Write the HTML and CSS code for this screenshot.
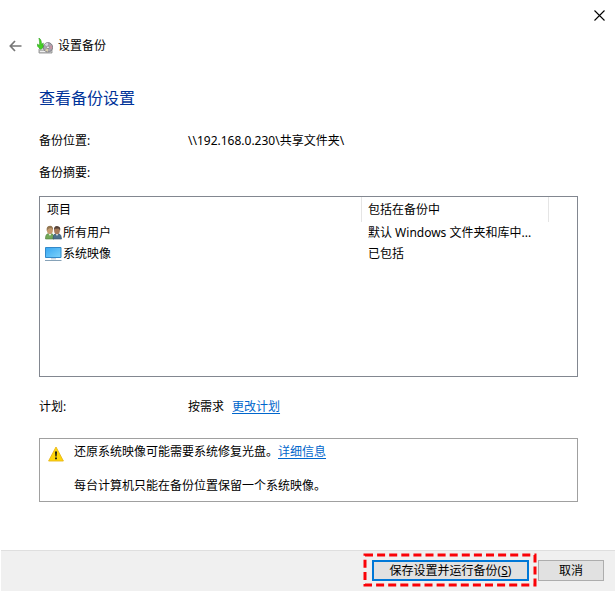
FILE: index.html
```html
<!DOCTYPE html>
<html lang="zh-CN">
<head>
<meta charset="utf-8">
<title>设置备份</title>
<link rel="stylesheet" href="styles.css">
</head>
<body>
<div class="window">
  <div class="titlebar">
    <svg class="close" width="11" height="11" viewBox="0 0 11 11"><path d="M.5.5l10 10M10.500.5l-10 10" stroke="#000" stroke-width="1.1"/></svg>
  </div>
  <header class="header">
    <svg class="back" width="13" height="12" viewBox="0 0 13 12"><path d="M6 1L1.300 6 6 11M1.500 6H12.500" fill="none" stroke="#777" stroke-width="1.7"/></svg>
    <svg class="app-icon" width="16" height="16" viewBox="0 0 16 16">
      <path d="M2 11l3-3h8l2 4v3H2z" fill="#d5d7d6" stroke="#777" stroke-width=".7"/>
      <path d="M2.500 12.500h7v2h-7z" fill="#eee" stroke="#888" stroke-width=".5"/>
      <circle cx="11" cy="9.300" r="4.700" fill="#a7a5ae" stroke="#74727a" stroke-width=".8"/>
      <path d="M11 9.300L7.500 6.500A4.500 4.500 0 0 1 11 4.800z" fill="#d6d5e1"/>
      <path d="M11 9.300l4-2v4z" fill="#c795a2"/>
      <path d="M11 9.300l-3 3.200 3 1.200z" fill="#d8cfaa"/>
      <circle cx="11" cy="9.300" r="1.300" fill="#fff" stroke="#666" stroke-width=".6"/>
      <path d="M1.800 0C4 1 4.600 3.500 4.500 6.500L6.300 5 6 9.500 3.700 11.500.3 8 .5 6l2 1.500C2.700 4 2.400 2 1.800 0z" fill="#43d322" stroke="#249516" stroke-width=".5"/>
    </svg>
    <span>设置备份</span>
  </header>
  <main class="content">
    <h1>查看备份设置</h1>
    <div class="field location"><span class="label">备份位置:</span><span>\\192.168.0.230\共享文件夹\</span></div>
    <div class="field summary"><span class="label">备份摘要:</span></div>
    <div class="list">
      <div class="row list-head"><span class="name">项目</span><span class="included">包括在备份中</span></div>
      <div class="row">
        <span class="name item">
          <svg width="17" height="16" viewBox="0 0 17 16">
            <path d="M.5 14q-.2-5 3-5.500h3q2.500.5 2.500 5.500z" fill="#73a957" stroke="#4c793c" stroke-width=".6"/>
            <path d="M8 14q-.2-4.500 2.500-5.500h3q3 .8 3 5.500z" fill="#4c718d" stroke="#35516a" stroke-width=".6"/>
            <path d="M3.500 8.500l1.500 2.500 1.500-2.500zM10.500 8.500l1.500 2.500 1.500-2.500z" fill="#edf1ee"/>
            <ellipse cx="4.900" cy="5" rx="3" ry="3.900" fill="#c69c70"/>
            <path d="M1.800 6Q.8 1 5 .8 8.300 1 8 5L6.300 3Q3 3 1.800 6z" fill="#937752"/>
            <ellipse cx="12" cy="5.500" rx="2.900" ry="3.700" fill="#a77a5a"/>
            <path d="M9 5.500Q8.500 1 12 1q4 .3 3.200 4.500L13.500 3.600 9.800 3.800z" fill="#554238"/>
          </svg>所有用户</span>
        <span class="included">默认 Windows 文件夹和库中...</span>
      </div>
      <div class="row">
        <span class="name item">
          <svg width="17" height="16" viewBox="0 0 17 16">
            <defs><linearGradient id="screen" x2="1" y2="1"><stop stop-color="#37a6f2"/><stop offset="1" stop-color="#7dd3fa"/></linearGradient></defs>
            <path d="M.5 1.500h15.500v10H.5z" fill="url(#screen)" stroke="#3389c9"/>
            <path d="M6 12h5v1.500H6z" fill="#ccd6df"/>
            <path d="M0 14.500h16.500" stroke="#86a2b8"/>
          </svg>系统映像</span>
        <span class="included">已包括</span>
      </div>
    </div>
    <div class="field plan"><span class="label">计划:</span><span>按需求</span><a class="change" href="#">更改计划</a></div>
    <div class="notice">
      <svg class="warn" width="16" height="16" viewBox="0 0 16 16">
        <path d="M8 1L15.400 15H.6z" fill="#ffd608" stroke="#e8b51a" stroke-width=".9" stroke-linejoin="round"/>
        <path d="M7 5.500h2l-.4 5H7.400zM7.100 11.500h1.800v1.800H7.100z" fill="#111"/>
      </svg>
      <div class="messages">
        <p>还原系统映像可能需要系统修复光盘。<a href="#">详细信息</a></p>
        <p>每台计算机只能在备份位置保留一个系统映像。</p>
      </div>
    </div>
  </main>
  <footer class="footer">
    <div class="primary-wrap">
      <button class="button primary">保存设置并运行备份(<u>S</u>)</button>
      <svg class="highlight" width="174" height="34" viewBox="0 0 174 34"><rect x="2" y="2" width="170" height="30" fill="none" stroke="#fa0207" stroke-width="3" stroke-dasharray="8 4.100" stroke-linecap="butt"/></svg>
    </div>
    <button class="button">取消</button>
  </footer>
</div>
</body>
</html>
```
FILE: styles.css
```css
* { box-sizing: border-box; }
body {
  margin: 0;
  background: #fff;
  color: #000;
  font: 12px/20px "Noto Sans", "Noto Sans CJK SC", sans-serif;
}
.window { width: 616px; height: 592px; padding: 0 1px 1px; display: flex; flex-direction: column; }
svg { flex: none; display: block; }
a { color: #0066cc; text-decoration: underline; text-underline-offset: 2px; }
.titlebar { height: 32px; display: flex; justify-content: flex-end; padding: 10px 10px 0 0; }
.header { height: 28px; display: flex; align-items: center; padding-left: 8px; }
.back { margin-right: 15px; }
.app-icon { margin-right: 5px; }
.content { padding: 0 37px 0 38px; flex: 1; }
h1 { margin: 25px 0 0; font-size: 16px; line-height: 26px; font-weight: 400; color: #003399; }
.field { display: flex; height: 20px; }
.label { width: 149px; }
.location { margin-top: 20px; }
.summary { margin-top: 12px; }
.list { height: 181px; margin-top: 13px; border: 1px solid #828790; }
.row { display: flex; height: 21px; line-height: 21px; }
.list-head { height: 25px; line-height: 25px; }
.name { width: 322px; padding-left: 7px; }
.item { display: flex; align-items: center; padding-left: 5px; gap: 1px; }
.included { width: 187px; padding-left: 6px; white-space: nowrap; }
.list-head .name, .list-head .included { border-right: 1px solid #e5e5e5; }
.plan { margin-top: 20px; }
.change { margin-left: 8px; }
.notice { height: 64px; margin-top: 21px; border: 1px solid #a0a0a0; display: flex; padding: 3px 8px; }
.warn { margin: 4px 10px 0 0; }
.messages p { margin: 0 0 14px; line-height: 20px; }
.footer { height: 41px; background: #f0f0f0; border-top: 1px solid #dfdfdf; display: flex; justify-content: flex-end; padding: 9px 11px 0 0; gap: 9px; }
.button { width: 66px; height: 21px; padding: 0; border: 1px solid #adadad; background: #e1e1e1; color: #000; font: inherit; line-height: 17px; display: block; }
.primary-wrap { position: relative; }
.primary { width: 157px; border: 2px solid #0078d7; }
.highlight { position: absolute; left: -9px; top: -7px; pointer-events: none; }
```
